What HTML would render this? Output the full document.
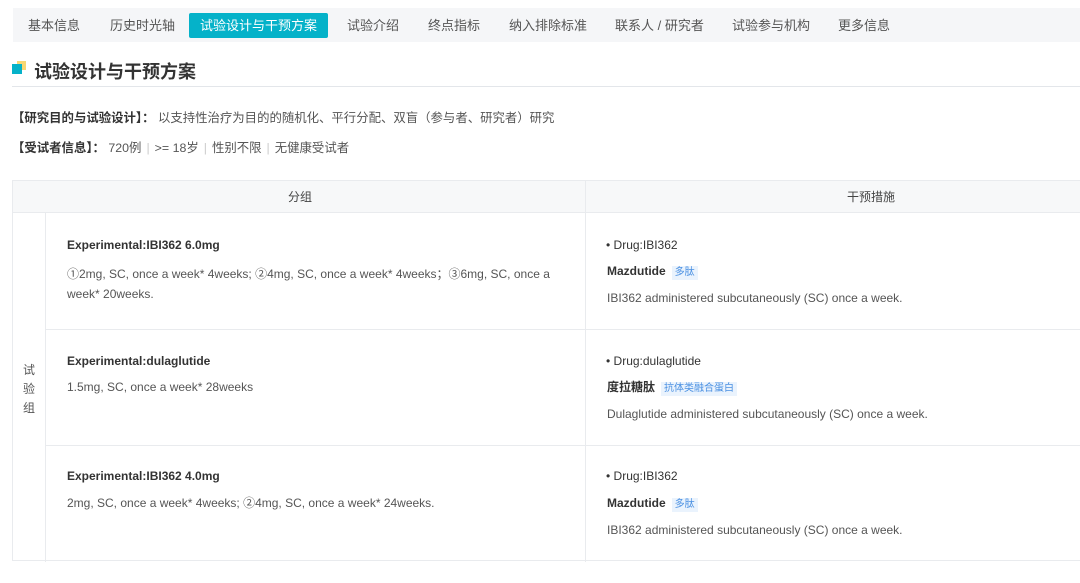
<!DOCTYPE html>
<html><head><meta charset="utf-8"><style>
*{margin:0;padding:0;box-sizing:border-box}
body{width:1080px;height:583px;background:#fff;font-family:"Liberation Sans","Noto Sans CJK SC",sans-serif;color:#333;position:relative;overflow:hidden}
.nav{position:absolute;left:13px;top:8px;width:1067px;height:34px;background:#f5f6f8}
.nav span{position:absolute;top:10px;font-size:13px;color:#555;line-height:15px}
.nav .act{top:5px;height:25px;line-height:25px;background:#05b2c9;color:#fff;border-radius:2px;padding:0 11px;left:176px}
.h{position:absolute;left:34px;top:58px;font-size:18px;font-weight:bold;color:#333}
.line{position:absolute;left:12px;top:86px;width:1068px;height:1px;background:#e3e6ea}
.t{position:absolute;font-size:12.4px;color:#555;line-height:14px}
.t b{color:#333}
.sep{color:#ccc;margin:0 5px}
.tbl{position:absolute;left:12px;top:180px;width:1070px;height:381px;border:1px solid #e9ebee}
.hd{position:absolute;left:0;top:0;width:100%;height:32px;background:#f7f8f9;border-bottom:1px solid #e9ebee}
.v{position:absolute;background:#e9ebee}
.c{position:absolute;font-size:12px;line-height:14px;color:#555}
.c b{color:#333;font-weight:bold}
.tag{display:inline-block;font-size:10px;background:#eaf3fd;color:#4a90e2;padding:0 3px;margin-left:6px;line-height:14px;font-weight:normal}
</style></head><body>
<div class="nav">
<span style="left:15px">基本信息</span>
<span style="left:97px">历史时光轴</span>
<span class="act">试验设计与干预方案</span>
<span style="left:334px">试验介绍</span>
<span style="left:415px">终点指标</span>
<span style="left:496px">纳入排除标准</span>
<span style="left:602px">联系人 / 研究者</span>
<span style="left:719px">试验参与机构</span>
<span style="left:825px">更多信息</span>
</div>
<div style="position:absolute;left:17px;top:61px;width:9px;height:9px;background:#f7d774"></div>
<div style="position:absolute;left:12px;top:64px;width:10px;height:10px;background:#05b2c9"></div>
<div class="h">试验设计与干预方案</div>
<div class="line"></div>
<div class="t" style="left:12px;top:111px"><b>【研究目的与试验设计】：</b> 以支持性治疗为目的的随机化、平行分配、双盲（参与者、研究者）研究</div>
<div class="t" style="left:12px;top:141px"><b>【受试者信息】：</b> 720例<span class="sep">|</span>&gt;= 18岁<span class="sep">|</span>性别不限<span class="sep">|</span>无健康受试者</div>
<div class="tbl">
<div class="hd"></div>
<div class="c" style="left:275px;top:9px;color:#444">分组</div>
<div class="c" style="left:834px;top:9px;color:#444">干预措施</div>
<div class="v" style="left:572px;top:0;width:1px;height:381px"></div>
<div class="v" style="left:32px;top:32px;width:1px;height:349px"></div>
<div class="v" style="left:32px;top:148px;width:1040px;height:1px"></div>
<div class="v" style="left:32px;top:264px;width:1040px;height:1px"></div>
<div class="c" style="left:10px;top:180px;width:14px;line-height:19px">试验组</div>
<div class="c" style="left:54px;top:57px"><b>Experimental:IBI362 6.0mg</b></div>
<div class="c" style="left:54px;top:83px;width:500px;line-height:20px">①2mg, SC, once a week* 4weeks; ②4mg, SC, once a week* 4weeks；③6mg, SC, once a week* 20weeks.</div>
<div class="c" style="left:54px;top:173px"><b>Experimental:dulaglutide</b></div>
<div class="c" style="left:54px;top:199px">1.5mg, SC, once a week* 28weeks</div>
<div class="c" style="left:54px;top:288px"><b>Experimental:IBI362 4.0mg</b></div>
<div class="c" style="left:54px;top:315px">2mg, SC, once a week* 4weeks; ②4mg, SC, once a week* 24weeks.</div>
<div class="c" style="left:593px;top:57px;color:#333">• Drug:IBI362</div>
<div class="c" style="left:594px;top:83px"><b>Mazdutide</b><span class="tag">多肽</span></div>
<div class="c" style="left:594px;top:110px">IBI362 administered subcutaneously (SC) once a week.</div>
<div class="c" style="left:593px;top:173px;color:#333">• Drug:dulaglutide</div>
<div class="c" style="left:594px;top:199px"><b>度拉糖肽</b><span class="tag">抗体类融合蛋白</span></div>
<div class="c" style="left:594px;top:226px">Dulaglutide administered subcutaneously (SC) once a week.</div>
<div class="c" style="left:593px;top:288px;color:#333">• Drug:IBI362</div>
<div class="c" style="left:594px;top:315px"><b>Mazdutide</b><span class="tag">多肽</span></div>
<div class="c" style="left:594px;top:342px">IBI362 administered subcutaneously (SC) once a week.</div>
</div>
</body></html>
